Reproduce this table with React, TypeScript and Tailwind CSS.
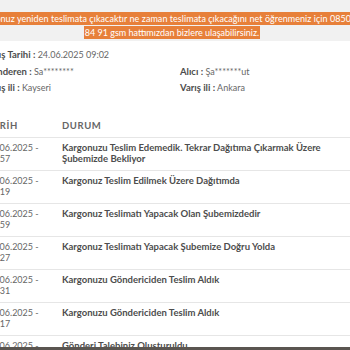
import React from 'react';

const rows = [
  { date: '24.06.2025 - 09:57', status: 'Kargonuzu Teslim Edemedik. Tekrar Dağıtıma Çıkarmak Üzere Şubemizde Bekliyor' },
  { date: '24.06.2025 - 08:19', status: 'Kargonuz Teslim Edilmek Üzere Dağıtımda' },
  { date: '24.06.2025 - 06:59', status: 'Kargonuz Teslimatı Yapacak Olan Şubemizdedir' },
  { date: '24.06.2025 - 01:27', status: 'Kargonuz Teslimatı Yapacak Şubemize Doğru Yolda' },
  { date: '24.06.2025 - 09:31', status: 'Kargonuzu Göndericiden Teslim Aldık' },
  { date: '24.06.2025 - 09:17', status: 'Kargonuzu Göndericiden Teslim Aldık' },
  { date: '24.06.2025 - 09:02', status: 'Gönderi Talebiniz Oluşturuldu' },
];

export default function App() {
  return (
    <div className="w-[350px] h-[350px] overflow-hidden bg-white flex flex-col font-['Lato',sans-serif]">
      <div className="flex-1 overflow-hidden">
        {/* Orange notice */}
        <div className="bg-[#f1f1f1] pt-[12px] pb-[1px] text-[9px] leading-[14px] text-white">
          <div className="whitespace-nowrap -ml-[24px] tracking-[0.05px]">
            <span className="bg-[#e7803a] px-[1px] py-[1px]">
              Kargonuz yeniden teslimata çıkacaktır ne zaman teslimata çıkacağını net öğrenmeniz için 0850 333
            </span>
          </div>
          <div className="text-center pr-[6px]">
            <span className="bg-[#e7803a] px-[1px] py-[1px]">84 91 gsm hattımızdan bizlere ulaşabilirsiniz.</span>
          </div>
        </div>

        <div className="-ml-[15px] w-[380px]">
          {/* Shipment info */}
          <div className="mt-[6px] grid grid-cols-[195px_1fr] text-[9px] leading-[16.5px] text-[#666]">
            <div><b className="text-[#4d4d4d] text-[9.5px]">Çıkış Tarihi :</b> 24.06.2025 09:02</div>
            <div />
            <div><b className="text-[#4d4d4d] text-[9.5px]">Gönderen :</b> Sa********</div>
            <div><b className="text-[#4d4d4d] text-[9.5px]">Alıcı :</b> Şa*******ut</div>
            <div><b className="text-[#4d4d4d] text-[9.5px]">Çıkış ili :</b> Kayseri</div>
            <div><b className="text-[#4d4d4d] text-[9.5px]">Varış ili :</b> Ankara</div>
          </div>

          {/* Movements table */}
          <div className="mt-[19px] ml-[2px]">
            <div className="flex h-[22px] items-center border-b border-[#e6e6e6] text-[9.5px] font-bold text-[#666] tracking-[0.6px]">
              <div className="w-[75px]">TARİH</div>
              <div>DURUM</div>
            </div>
            {rows.map((r, i) => (
              <div key={i} className="flex border-b border-[#e6e6e6] pt-[4.5px] pb-[4.5px] leading-[11px] min-h-[33px]">
                <div className="w-[75px] pr-[12px] text-[9px] text-[#666] shrink-0">{r.date}</div>
                <div className="w-[272px] text-[9.5px] font-bold text-[#4d4d4d]">{r.status}</div>
              </div>
            ))}
          </div>
        </div>
      </div>
      <div className="h-[3px] bg-[#5a5550]" />
    </div>
  );
}
